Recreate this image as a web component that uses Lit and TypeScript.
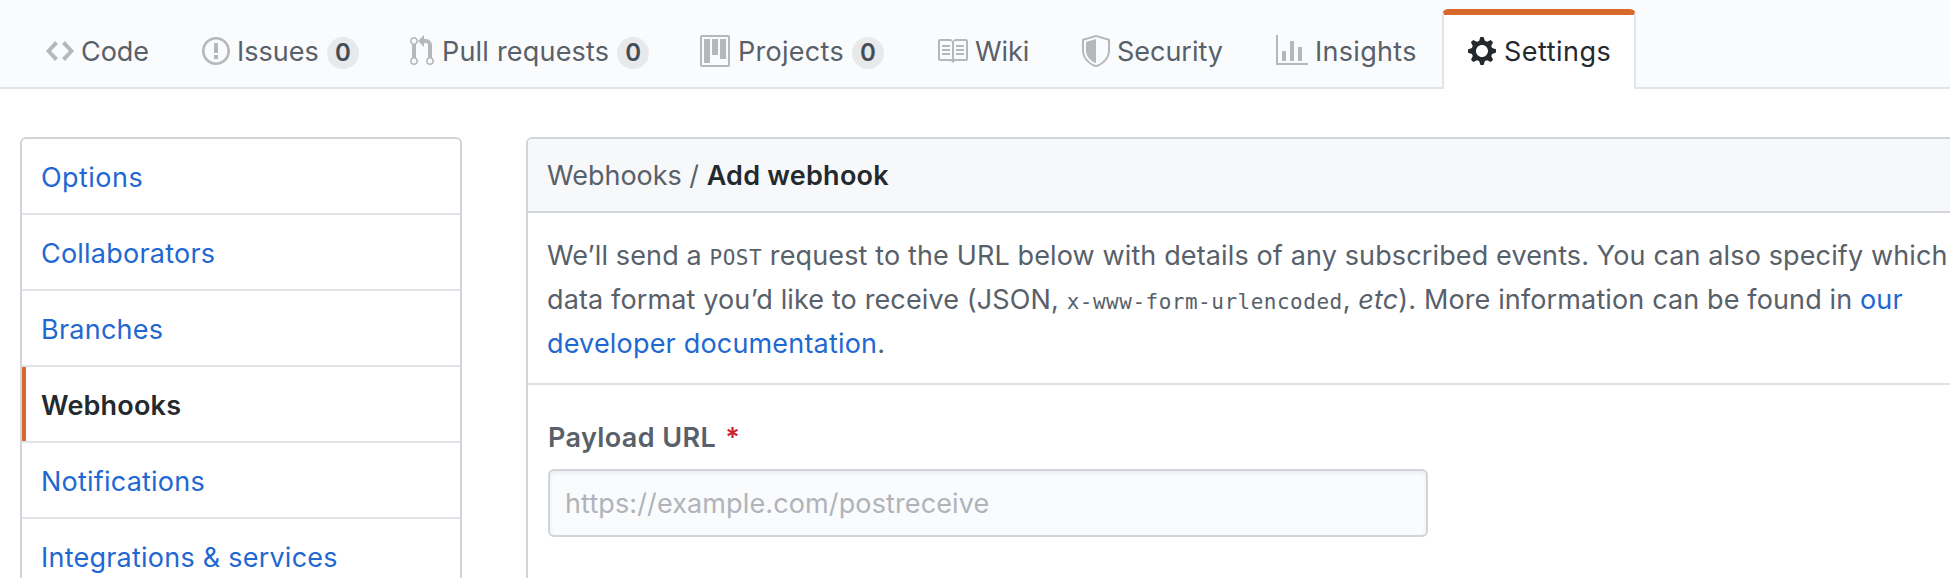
import { LitElement, html, css, svg } from "lit";
import { customElement } from "lit/decorators.js";
import { classMap } from "lit/directives/class-map.js";
import { styleMap } from "lit/directives/style-map.js";

interface Tab {
  label: string;
  iconWidth: number;
  path: string;
  tracking: number;
  gap?: number;
  count?: number;
  active?: boolean;
}

const TABS: Tab[] = [
  { label: "Code", iconWidth: 14, tracking: -0.05, path: "M9.5 3L8 4.5 11.5 8 8 11.5 9.5 13 14 8 9.5 3zm-5 0L0 8l4.5 5L6 11.5 2.5 8 6 4.5 4.5 3z" },
  { label: "Issues", iconWidth: 14, tracking: 0.02, count: 0, path: "M7 2.3c3.14 0 5.7 2.56 5.7 5.7s-2.56 5.7-5.7 5.7A5.71 5.71 0 0 1 1.3 8c0-3.14 2.56-5.7 5.7-5.7zM7 1C3.14 1 0 4.14 0 8s3.14 7 7 7 7-3.14 7-7-3.14-7-7-7zm1 3H6v5h2V4zm0 6H6v2h2v-2z" },
  { label: "Pull requests", iconWidth: 12, tracking: 0.2, gap: 8, count: 0, path: "M11 11.28V5c-.03-.78-.34-1.47-.94-2.06C9.46 2.35 8.78 2.03 8 2H7V0L4 3l3 3V4h1c.27.02.48.11.69.31.21.2.3.42.31.69v6.28A1.993 1.993 0 0 0 10 15a1.993 1.993 0 0 0 1-3.72zm-1 2.92c-.66 0-1.2-.55-1.2-1.2 0-.65.55-1.2 1.2-1.2.65 0 1.2.55 1.2 1.2 0 .65-.55 1.2-1.2 1.2zM4 3c0-1.11-.89-2-2-2a1.993 1.993 0 0 0-1 3.72v6.56A1.993 1.993 0 0 0 2 15a1.993 1.993 0 0 0 1-3.72V4.72c.59-.34 1-.98 1-1.72zm-.8 10c0 .66-.55 1.2-1.2 1.2-.65 0-1.2-.55-1.2-1.2 0-.65.55-1.2 1.2-1.2.65 0 1.2.55 1.2 1.2zM2 4.2C1.34 4.2.8 3.65.8 3c0-.65.55-1.2 1.2-1.2.65 0 1.2.55 1.2 1.2 0 .65-.55 1.2-1.2 1.2z" },
  { label: "Projects", iconWidth: 15, tracking: 0.28, gap: 8, count: 0, path: "M10 12h3V2h-3v10zm-4-2h3V2H6v8zm-4 4h3V2H2v12zm-1 1h13V1H1v14zM14 0H1a1 1 0 0 0-1 1v14a1 1 0 0 0 1 1h13a1 1 0 0 0 1-1V1a1 1 0 0 0-1-1z" },
  { label: "Wiki", iconWidth: 16, tracking: -0.1, path: "M3 5h4v1H3V5zm0 3h4V7H3v1zm0 2h4V9H3v1zm11-5h-4v1h4V5zm0 2h-4v1h4V7zm0 2h-4v1h4V9zm2-6v9c0 .55-.45 1-1 1H9.5l-1 1-1-1H2c-.55 0-1-.45-1-1V3c0-.55.45-1 1-1h5.5l1 1 1-1H15c.55 0 1 .45 1 1zm-8 .5L7.5 3H2v9h6V3.5zm7-.5H9.5l-.5.5V12h6V3z" },
  { label: "Security", iconWidth: 14, tracking: -0.03, path: "M0 2l7-2 7 2v6.02C14 12.69 8.69 16 7 16c-1.69 0-7-3.31-7-7.98V2zm1 .75L7 1l6 1.75v5.268C13 12.104 8.449 15 7 15c-1.449 0-6-2.896-6-6.982V2.75zm1 .75L7 2v12c-1.207 0-5-2.482-5-5.985V3.5z" },
  { label: "Insights", iconWidth: 16, tracking: 0.3, path: "M16 14v1H0V0h1v14h15zM5 13H3V8h2v5zm4 0H7V3h2v10zm4 0h-2V6h2v7z" },
  { label: "Settings", iconWidth: 14, tracking: 0.5, gap: 8, active: true, path: "M14 8.77v-1.6l-1.94-.64-.45-1.09.88-1.84-1.13-1.13-1.81.91-1.09-.45-.69-1.92h-1.6l-.63 1.94-1.11.45-1.84-.88-1.13 1.13.91 1.81-.45 1.09L0 7.23v1.59l1.94.64.45 1.09-.88 1.84 1.13 1.13 1.81-.91 1.09.45.69 1.92h1.59l.63-1.94 1.11-.45 1.84.88 1.13-1.13-.92-1.81.47-1.09L14 8.75v.02zM7 11c-1.66 0-3-1.34-3-3s1.34-3 3-3 3 1.34 3 3-1.34 3-3 3z" },
];

const MENU = [
  { label: "Options", tracking: 0.45 },
  { label: "Collaborators", tracking: 0.22 },
  { label: "Branches", tracking: 0.25 },
  { label: "Webhooks", tracking: 0.2, active: true },
  { label: "Notifications", tracking: 0.22 },
  { label: "Integrations & services", tracking: 0.23 },
];

@customElement("repo-nav")
export class RepoNav extends LitElement {
  static styles = css`
    :host { display: block; }
    .bar {
      box-sizing: border-box;
      display: grid;
      grid-template-columns: 156px 208px 290px 236px 146px 194px 194px 194px;
      height: 89px;
      padding: 9px 0 0 18px;
      background: linear-gradient(#e1e4e8, #e1e4e8) 0 100% / 100% 2px no-repeat #fafbfc;
    }
    .tab {
      box-sizing: border-box;
      display: flex;
      align-items: center;
      height: 80px;
      padding: 6px 0 2px 28px;
      color: #586069;
      white-space: nowrap;
    }
    .tab.active {
      padding: 0 0 2px 24px;
      color: #24292e;
      background: #fff;
      border: 2px solid #e1e4e8;
      border-top: 6px solid #d9692b;
      border-bottom: 0;
      border-radius: 6px 6px 0 0;
    }
    .icon { flex: none; fill: #b5b7b9; }
    .active .icon { fill: #24292e; }
    .label { padding-top: 2px; }
    .count {
      width: 32px;
      height: 32px;
      margin: 4px 0 0 8px;
      border-radius: 16px;
      background: #e8e9eb;
      color: #444d56;
      font-size: 24px;
      font-weight: 600;
      line-height: 31px;
      text-align: center;
    }
  `;

  render() {
    return html`<nav class="bar">
      ${TABS.map(
        (t) => html`<div class=${classMap({ tab: true, active: !!t.active })}>
          <svg class="icon" width=${t.iconWidth * 2} height="32" viewBox="0 0 ${t.iconWidth} 16">
            ${svg`<path fill-rule="evenodd" d=${t.path}></path>`}
          </svg>
          <span class="label" style=${styleMap({ letterSpacing: `${t.tracking}px`, marginLeft: `${t.gap ?? 7}px` })}>${t.label}</span>
          ${t.count === undefined ? "" : html`<span class="count">${t.count}</span>`}
        </div>`
      )}
    </nav>`;
  }
}

@customElement("settings-menu")
export class SettingsMenu extends LitElement {
  static styles = css`
    :host { display: block; }
    .menu { border: 2px solid #d1d5da; border-radius: 6px; overflow: hidden; }
    .item {
      box-sizing: border-box;
      height: 76px;
      padding: 3px 0 0 19px;
      border-bottom: 2px solid #e1e4e8;
      color: #1f68d2;
      white-space: nowrap;
    }
    .item.active {
      color: #24292e;
      font-weight: 600;
      background: linear-gradient(#d9692b, #d9692b) 0 0 / 4px 100% no-repeat;
    }
    .text { display: block; line-height: 72px; }
  `;

  render() {
    return html`<nav class="menu">
      ${MENU.map(
        (m) => html`<div class=${classMap({ item: true, active: !!m.active })}>
          <span class="text" style=${styleMap({ letterSpacing: `${m.tracking}px` })}>${m.label}</span>
        </div>`
      )}
    </nav>`;
  }
}

@customElement("webhook-form")
export class WebhookForm extends LitElement {
  static styles = css`
    :host { display: block; }
    .box { border: 2px solid #d1d5da; border-radius: 6px; overflow: hidden; }
    .header {
      height: 71px;
      padding: 1px 0 0 19px;
      background: #f6f8fa;
      border-bottom: 2px solid #d1d5da;
      line-height: 72px;
      letter-spacing: -0.02px;
    }
    .title { color: #24292e; font-weight: 600; letter-spacing: 0.24px; }
    .intro {
      padding: 21px 0 17px 19px;
      border-bottom: 2px solid #dfe2e5;
      line-height: 44px;
      letter-spacing: 0.13px;
      white-space: nowrap;
    }
    .line { display: block; height: 44px; }
    .code {
      font: 21px/1 "DejaVu Sans Mono", monospace;
      letter-spacing: 0.5px;
    }
    .link { color: #1f68d2; }
    .doc { letter-spacing: 0.18px; }
    .fields { height: 300px; padding: 32px 0 0 20px; }
    .name { display: block; line-height: 42px; font-weight: 600; letter-spacing: 0.38px; }
    .required { margin-left: 2px; color: #cb2431; }
    .input {
      box-sizing: border-box;
      display: block;
      width: 880px;
      height: 68px;
      margin: 10px 0 0;
      padding: 0 15px;
      border: 2px solid #d1d5da;
      border-radius: 6px;
      background: #fafbfc;
      box-shadow: inset 0 2px 4px rgba(27, 31, 35, 0.075);
      font: inherit;
      letter-spacing: 0.12px;
      outline: none;
    }
    .input::placeholder { color: #b0b3ba; opacity: 1; }
  `;

  render() {
    return html`<section class="box">
      <div class="header">Webhooks / <span class="title">Add webhook</span></div>
      <div class="intro">
        <span class="line">We’ll send a <span class="code">POST</span> request to the URL below with details of any subscribed events. You can also specify which</span>
        <span class="line">data format you’d like to receive (JSON, <span class="code">x-www-form-urlencoded</span>, <em>etc</em>). More information can be found in <span class="link">our</span></span>
        <span class="line"><span class="link doc">developer documentation</span>.</span>
      </div>
      <div class="fields">
        <label class="name" for="url">Payload URL <span class="required">*</span></label>
        <input class="input" id="url" type="text" placeholder="https://example.com/postreceive" />
      </div>
    </section>`;
  }
}

@customElement("app-root")
export class AppRoot extends LitElement {
  static styles = css`
    :host {
      display: block;
      width: 100%;
      height: 578px;
      overflow: hidden;
      background: #fff;
      color: #586069;
      font: 27px/1.5 Inter, "Liberation Sans", sans-serif;
    }
    .page { display: flex; gap: 64px; padding: 48px 0 0 20px; }
    .side { flex: none; width: 442px; }
    .main { flex: none; width: 1470px; }
  `;

  render() {
    return html`<repo-nav></repo-nav>
      <div class="page">
        <settings-menu class="side"></settings-menu>
        <webhook-form class="main"></webhook-form>
      </div>`;
  }
}
